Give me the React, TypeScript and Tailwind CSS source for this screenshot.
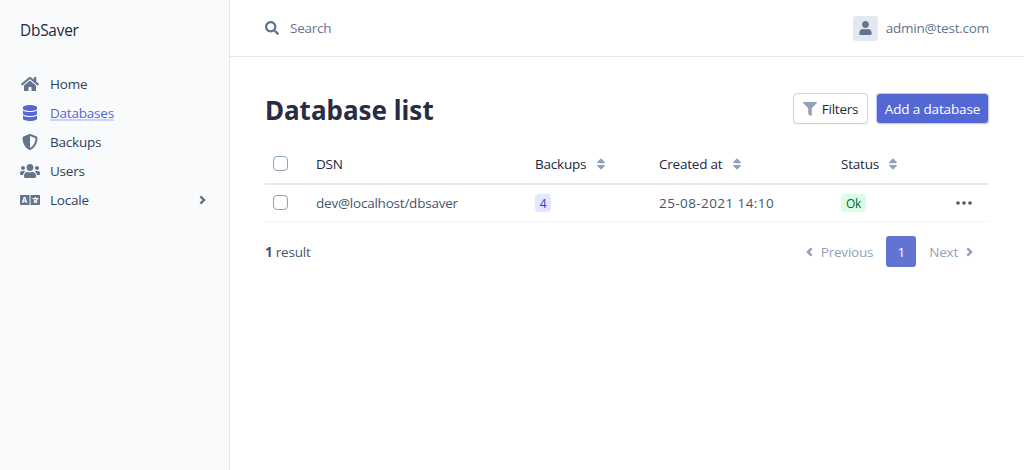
import React from 'react';
import {
  FaDatabase,
  FaFilter,
  FaHome,
  FaLanguage,
  FaSearch,
  FaShieldAlt,
  FaSort,
  FaUser,
  FaUsers,
} from 'react-icons/fa';

type MenuItem = {
  label: string;
  icon: React.ReactNode;
  active?: boolean;
  expandable?: boolean;
};

const menu: MenuItem[] = [
  { label: 'Home', icon: <FaHome className="h-4 w-[18px]" /> },
  { label: 'Databases', icon: <FaDatabase className="h-4 w-3.5" />, active: true },
  { label: 'Backups', icon: <FaShieldAlt className="size-4" /> },
  { label: 'Users', icon: <FaUsers className="h-4 w-5" /> },
  { label: 'Locale', icon: <FaLanguage className="h-4 w-5" />, expandable: true },
];

function Chevron({ left = false }: { left?: boolean }) {
  return (
    <svg viewBox="0 0 7 10" className="h-2.5 w-[7px] fill-none stroke-current">
      <path d={left ? 'M5.6 1.3 2 5l3.6 3.7' : 'M1.4 1.3 5 5 1.4 8.7'} strokeWidth="2.5" />
    </svg>
  );
}

function Sidebar() {
  return (
    <aside className="flex w-[230px] shrink-0 flex-col border-r border-slate-200 bg-slate-50 px-5">
      <div className="pt-[19px] text-[15.4px] leading-6 text-slate-800">DbSaver</div>
      <nav className="mt-[26px] flex flex-col">
        {menu.map((item) => (
          <a
            key={item.label}
            className={
              item.active
                ? 'flex h-[29px] items-center text-[#5368d5]'
                : 'flex h-[29px] items-center text-slate-700'
            }
          >
            <span
              className={
                item.active
                  ? 'flex w-5 justify-center text-[#5368d5]'
                  : 'flex w-5 justify-center text-slate-500'
              }
            >
              {item.icon}
            </span>
            <span
              className={
                item.active
                  ? 'ml-2.5 h-[17px] border-b-2 border-[#c7d2fe] leading-[18px]'
                  : 'ml-2.5 leading-5'
              }
            >
              {item.label}
            </span>
            {item.expandable && (
              <span className="mr-[3px] ml-auto text-slate-500">
                <Chevron />
              </span>
            )}
          </a>
        ))}
      </nav>
    </aside>
  );
}

function Header() {
  return (
    <header className="flex h-[57px] shrink-0 items-center border-b border-slate-200 px-[35px]">
      <FaSearch className="size-3.5 text-slate-500" />
      <span className="ml-[11px] text-slate-500">Search</span>
      <div className="ml-auto flex items-center text-slate-500">
        <span className="flex size-[25px] items-center justify-center rounded-[3px] bg-slate-200 pb-px">
          <FaUser className="h-3.5 w-[13px]" />
        </span>
        <span className="ml-2">admin@test.com</span>
      </div>
    </header>
  );
}

function Checkbox() {
  return (
    <span
      role="checkbox"
      aria-checked="false"
      className="block size-[15px] rounded-[4px] border border-slate-400 bg-white"
    />
  );
}

function SortableHeading({ label }: { label: string }) {
  return (
    <span className="flex items-center gap-[7.5px]">
      {label}
      <FaSort className="size-3.5 text-slate-400" />
    </span>
  );
}

const columns = 'grid grid-cols-[51px_219px_124px_182px_1fr_33px] items-center';

export default function App() {
  return (
    <div className="flex h-[470px] w-full bg-white font-['Open_Sans','Noto_Sans',sans-serif] text-[13.5px] leading-5 font-normal tracking-[-0.22px]">
      <Sidebar />
      <main className="flex min-w-0 flex-1 flex-col">
        <Header />
        <section className="px-[35px]">
          <div className="flex items-start pt-[35px]">
            <h1 className="font-['Noto_Sans',sans-serif] text-[26px] leading-9 font-bold tracking-normal text-[#292d42]">
              Database list
            </h1>
            <div className="mt-px ml-auto flex gap-2">
              <button className="flex h-[31px] w-[75px] items-center justify-center gap-[5px] rounded-[4px] border border-slate-300 bg-white text-slate-800 shadow-xs">
                <FaFilter className="size-3.5 text-slate-400" />
                Filters
              </button>
              <button className="h-[31px] w-[113px] rounded-[4px] border border-[#c3cbf3] bg-[#5368d5] tracking-[-0.15px] text-white shadow-xs">
                Add a database
              </button>
            </div>
          </div>

          <div className={`${columns} mt-4 h-[41px] border-b-2 border-slate-200 text-slate-800`}>
            <span className="pl-2">
              <Checkbox />
            </span>
            <span>DSN</span>
            <SortableHeading label="Backups" />
            <SortableHeading label="Created at" />
            <SortableHeading label="Status" />
          </div>
          <div className={`${columns} h-[37px] border-b border-slate-100 text-slate-600`}>
            <span className="-mt-px pl-2">
              <Checkbox />
            </span>
            <span>dev@localhost/dbsaver</span>
            <span>
              <span className="flex h-[18px] w-4 items-center justify-center rounded-[4px] bg-indigo-100 pt-px text-xs text-indigo-700">
                4
              </span>
            </span>
            <span className="tracking-[0.42px]">25-08-2021 14:10</span>
            <span className="flex h-[18px] w-[25px] items-center justify-center rounded-[4px] bg-green-100 pt-px text-xs text-green-800">
              Ok
            </span>
            <svg viewBox="0 0 16 4" className="-mt-px h-1 w-4 fill-slate-600">
              <circle cx="2" cy="2" r="1.8" />
              <circle cx="8" cy="2" r="1.8" />
              <circle cx="14" cy="2" r="1.8" />
            </svg>
          </div>

          <div className="mt-3.5 flex h-[31px] items-center text-slate-600">
            <span>
              <b>1</b> result
            </span>
            <div className="ml-auto flex items-center pr-4 text-slate-400">
              <Chevron left />
              <span className="ml-2">Previous</span>
              <span className="mx-[13px] flex h-[31px] w-[30px] items-center justify-center rounded-[3px] bg-[#6274d2] text-white">
                1
              </span>
              <span className="mr-2">Next</span>
              <Chevron />
            </div>
          </div>
        </section>
      </main>
    </div>
  );
}
